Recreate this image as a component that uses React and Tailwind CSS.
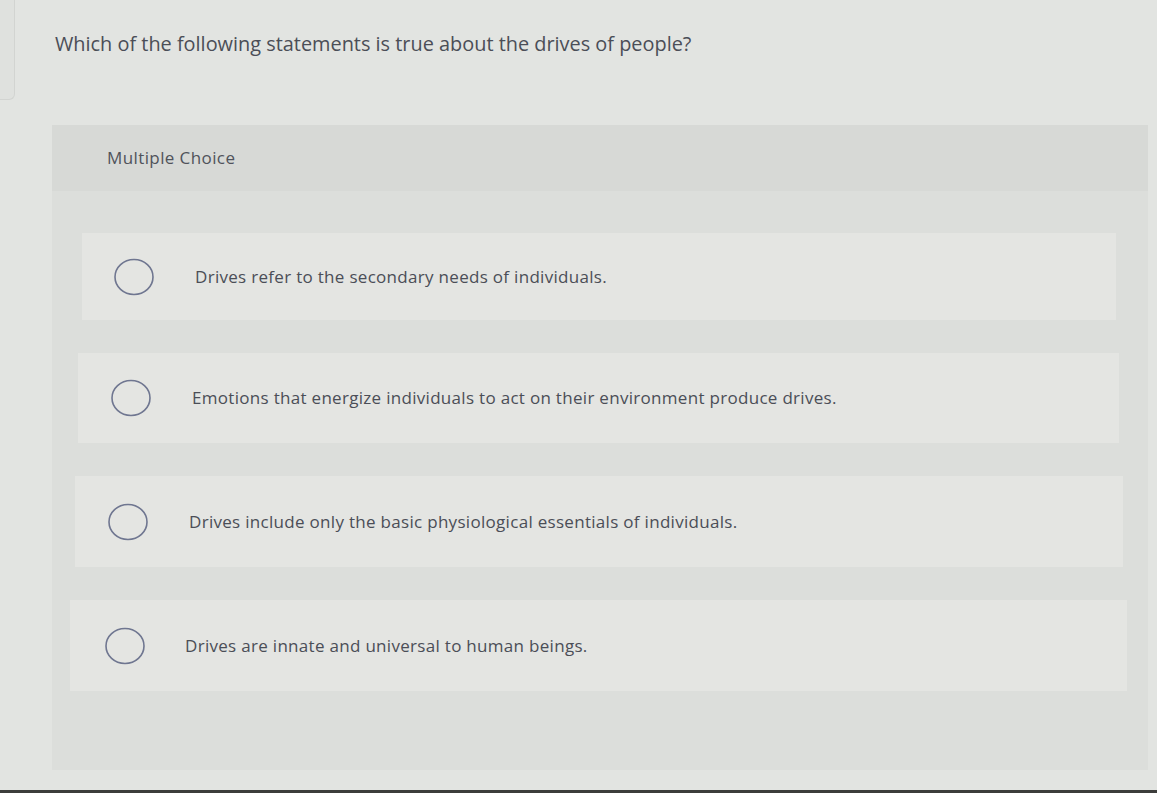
import React from 'react';

const options = [
  { text: 'Drives refer to the secondary needs of individuals.', row: 'ml-[30px] mr-[32px] h-[87px]', circle: 'ml-[31px]', gap: 'ml-[40px]' },
  { text: 'Emotions that energize individuals to act on their environment produce drives.', row: 'ml-[26px] mr-[29px] h-[90px]', circle: 'ml-[32px]', gap: 'ml-[40px]' },
  { text: 'Drives include only the basic physiological essentials of individuals.', row: 'ml-[23px] mr-[25px] h-[91px]', circle: 'ml-[32px]', gap: 'ml-[40px]' },
  { text: 'Drives are innate and universal to human beings.', row: 'ml-[18px] mr-[21px] h-[91px]', circle: 'ml-[34px]', gap: 'ml-[39px]' },
];

function Radio() {
  return (
    <svg width="42" height="40" viewBox="0 0 42 40" className="shrink-0">
      <ellipse cx="21" cy="20" rx="19" ry="17.5" fill="none" stroke="#6f7690" strokeWidth="1.6" />
    </svg>
  );
}

export default function App() {
  return (
    <div className="w-[1157px] h-[793px] overflow-hidden bg-[#e2e4e1] text-[#4d5058] font-['Open_Sans','Lato',sans-serif] flex flex-col">
      {/* Question */}
      <div className="flex">
        <div className="w-[15px] h-[100px] border-r border-b border-[#d2d4d1] rounded-br-[6px] bg-[#dfe1de]" />
        <h1 className="ml-[40px] mt-[30px] text-[19.9px] leading-[28px] text-[#4b4e57]">
          Which of the following statements is true about the drives of people?
        </h1>
      </div>

      {/* Question panel */}
      <div className="ml-[52px] mr-[9px] mt-[25px] h-[645px] bg-[#dcdedb] flex flex-col">
        <div className="h-[66px] bg-[#d7d9d6] flex items-center pl-[55px] text-[17px] tracking-[0.4px] text-[#50535b]">
          Multiple Choice
        </div>

        <div className="flex flex-col gap-[33px] mt-[42px]">
          {options.map((opt, i) => (
            <div key={i} className={`${opt.row} bg-[#e4e5e2] flex items-center`}>
              <div className={opt.circle}>
                <Radio />
              </div>
              <span className={`${opt.gap} text-[17px] tracking-[0.3px] text-[#4b4e57]`}>{opt.text}</span>
            </div>
          ))}
        </div>
      </div>
      <div className="flex-1" />
      <div className="h-[3px] bg-[#3c3d3b]" />
    </div>
  );
}
